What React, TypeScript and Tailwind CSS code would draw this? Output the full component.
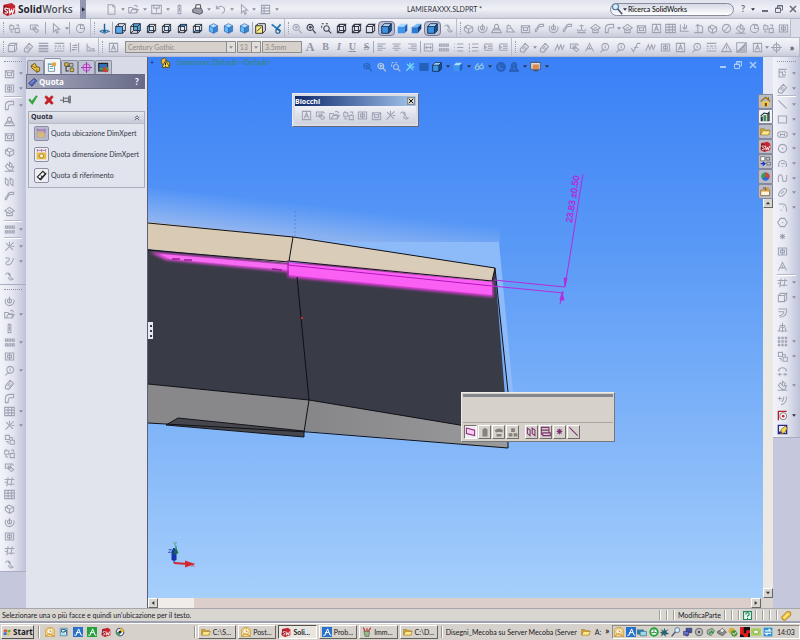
import type { ReactNode } from 'react';
import clsx from 'clsx';

// Outline glyphs on a 16x16 grid, drawn with the current text colour
const glyphs: Record<string, string> = {
  page: 'M3 1h7l3 3v11H3zM10 1v3h3',
  open: 'M1 13V5h5l1 2h5v6zM3 13l3-5h9l-3 5M9 3c2-2 4-1 5 2',
  save: 'M1 2h14v12H1zM4 2v4h8V2M8 6v5M8 12v2',
  clip: 'M6 3h4v11H6zM6 3q2-3 4 0M8 5v6',
  undo: 'M2 2v5h5M2 7c3-5 12-5 12 2 0 3-2 4-4 5',
  cursor: 'M5 1v12l3-3 2 5 2-1-2-5h4z',
  list: 'M2 2h12v12H2zM2 6h12M2 10h12M6 2v12',
  swap: 'M1 4h6v5H1zM9 8h6v6H9zM10 3h4v3M6 13H3v-3M3 1v3M12 6v2',
  sketch: 'M2 3h8v6H2zM5 9l6 5 3-3-5-4zM5 6h3M11 2l3 3',
  globe: 'M8 2a6 6 0 1 0 0 12a6 6 0 1 0 0-12zM8 2v6h6M10 4l3-2',
  cube: 'M2 5h9v9H2zM2 5l3-3h9l-3 3M14 2v9l-3 3',
  wire: 'M2 5h9v9H2zM2 5l3-3h9l-3 3M14 2v9l-3 3M5 2v9h9M5 11l-3 3',
  iso: 'M8 1l6 3v8l-6 3-6-3V4zM2 4l6 3 6-3M8 7v8',
  zoom: 'M6 2a4.500 4.500 0 1 0 .1 0M10 10l4 5M4 6h5M6 4v5',
  zoomArea: 'M1 1h3M7 1h3M1 4v3M8 4a4 4 0 1 0 .1 0M11 11l4 4',
  lines: 'M1 2h14M1 5h14M1 6h14M1 9h14M1 10h14M1 13h14M1 14h14',
  dashes: 'M1 2h14M1 6h3M6 6h4M12 6h3M1 9h2M5 9h2M9 9h2M13 9h2M1 13h14',
  spacing: 'M2 1v14M14 1v14M5 5h6l-2-2M11 11H5l2 2M5 8h7',
  corner: 'M14 2H3v11h9M3 6h5v4M10 4l3 3M7 10h6',
  constraint: 'M3 2v11h12M3 6l4 2v5M9 10h4v3',
  left: 'M2 3h12M2 6h8M2 9h12M2 12h7',
  center: 'M2 3h12M4 6h8M2 9h12M5 12h6',
  right: 'M2 3h12M6 6h8M2 9h12M7 12h7',
  fit: 'M2 3h12v10H2zM4 8h8M6 6L4 8l2 2M10 6l2 2-2 2',
  bullets: 'M2 3h1M6 3h9M2 8h1M6 8h9M2 13h1M6 13h9',
  numbers: 'M2 2v3M2 7v3M2 12v3M6 3h9M6 8h9M6 13h9',
  indent: 'M2 3h12M7 6h7M7 9h7M2 12h12M2 5l3 3-3 2z',
  boss: 'M2 6l5-3 7 3v6l-6 3-6-4zM2 6l6 3 6-3M8 9v6M5 4v4',
  revolve: 'M3 4c-3 5 0 10 5 10s8-5 6-9M5 7a3 3 0 1 0 6 0a3 3 0 1 0-6 0M8 1v9',
  sweep: 'M2 13C6 13 4 5 9 5h5M2 9c4 0 2-6 7-7h5v3M2 9v4',
  loft: 'M8 2a3 3 0 1 0 .1 0M3 10h10l2 4H1zM5 7l-2 3M11 7l2 3',
  fillet: 'M2 14V8c0-4 3-6 7-6h5v5H9c-2 0-3 2-3 7zM2 14h4',
  shell: 'M2 4h12v10H2zM5 7h6v4H5zM2 4l3 3M14 4l-3 3',
  rib: 'M1 13h14M3 13V4h4l6 9M5 2v2M5 8h3',
  pattern: 'M2 3h3v3H2zM7 3h3v3H7zM12 3h3v3h-3zM2 10h3v3H2zM7 10h3v3H7zM12 10h3v3h-3z',
  dots: 'M2 2h2v2H2zM7 2h2v2H7zM12 2h2v2h-2zM2 7h2v2H2zM7 7h2v2H7zM12 7h2v2h-2zM2 12h2v2H2zM7 12h2v2H7zM12 12h2v2h-2z',
  grid: 'M1 2h14v12H1zM1 6h14M1 10h14M6 2v12M11 2v12',
  axis: 'M2 14L14 2M3 3l10 10M8 1v5M11 8h4',
  spring: 'M2 3h4c3 0 2 4-1 5s-3 5 1 5 6-3 8-10',
  link: 'M2 5c3-4 8-1 7 2M14 11c-3 4-8 1-7-2M6 4l6 8',
  glasses: 'M2 9a3 3 0 1 0 6 0a3 3 0 1 0-6 0M9 8a3 3 0 1 0 6 0a3 3 0 1 0-6 0M3 6l4-4M11 5l3-3',
  arrowDown: 'M2 2v10h12M8 1v8M5 6l3 3 3-3M11 3v5',
  arrowUp: 'M2 14h12V5M7 13V2M4 5l3-3 3 3M11 3l3 3',
  hook: 'M8 2v7M8 9c-2 4-6 3-6 0M8 9c2 4 6 3 6 0M5 4h6M2 14h12',
  tent: 'M1 7l7-5 7 5-7 4zM4 9v5h8V9M6 7h4',
  no: 'M8 2a6 6 0 1 0 .1 0M4 12l8-8',
  tag: 'M2 10l7-8 5 5-7 8-5-1zM5 10l4-4M7 12l4-4',
  balloon: 'M9 2a5 5 0 1 0 .1 0M6 11l-4 4M9 5v4',
  check: 'M2 9l3 5L11 2h4M6 8h6',
  wave: 'M1 13l4-9 2 7 3-7 2 7 3-7',
  frame: 'M2 3h12v10H2zM5 6h6v4H5zM8 3v10',
  letterBox: 'M2 2h12v12H2zM5 12l3-8 3 8M6 9h4',
  tri: 'M8 2l7 12H1zM8 6v4M8 12v1',
  shade: 'M1 1h14v14H1zM2 14L14 2M5 14l9-9M8 14l6-6M11 14l3-3M3 14L14 3',
  target: 'M8 3a5 5 0 1 0 .1 0M8 0v16M0 8h16',
  line: 'M2 2l12 12',
  rect: 'M2 3h12v10H2z',
  slot: 'M5 4h6a4 4 0 0 1 0 8H5a4 4 0 0 1 0-8zM5 6v4M11 6v4M5 8h6',
  circle: 'M8 2a6 6 0 1 0 .1 0M8 7v2M7 8h2',
  arc: 'M2 12C2 1 14 1 14 12M7 12h2M6 9a3 3 0 0 1 5 0M2 12h2M12 12h2',
  spline: 'M2 13V7c0-7 6-5 6 1s6 6 6 0V3',
  ellipse: 'M3 13C0 10 9 0 13 3s-6 13-10 10zM6 10l4-4',
  curve: 'M3 3h6c4 0 5 4 5 11M5 12h2M9 7h1',
  hex: 'M5 2h6l4 6-4 6H5L1 8zM7 8h2',
  star: 'M8 4v8M4 8h8M5 5l6 6M11 5l-6 6',
  text: 'M2 14L8 2l6 12M5 10h6M8 6v5',
  trim: 'M1 5h14M4 12h11M6 2L4 15M12 2l-2 12M1 9h5',
  offset: 'M2 3h12v3c0 5-4 8-10 9M2 7h8c0 3-3 5-7 6M14 3v4',
  mirror: 'M3 13h10L11 5H5zM8 1v14M1 13h14M6 8h4',
  convert: 'M2 2h6v6H2zM9 9h6v6H9zM8 5h4v4M3 11h3v3',
  plusArc: 'M4 2v6M1 5h6M14 2c0 7-3 11-8 12M10 2c0 4-1 6-3 8',
  move: 'M2 7C3 1 13 1 14 7M1 12h6M4 10v5M9 12h6M12 10v5M2 7h2M12 7h2',
  fan: 'M8 14l-6-6 3-4 3 4V2l4 3-2 4 4-1-2 5zM1 15h14',
  planes: 'M2 3l4 3v8l-4-3zM9 3l4 3v8l-4-3z',
  rects: 'M2 2h11v4H2zM4 10h11v4H4zM2 6v6h2M13 6v4',
  bell: 'M5 4q3-4 6 0v7l3 3H2l3-3zM1 14h14M8 6v3',
};

// Filled silhouettes of the selection filters that are not available
const blobs: Record<string, string> = {
  solidBody: 'M4 15V4q4-5 8 0v11z',
  surface: 'M1 6q7-7 14 0l-3 3-1-1H5L4 9zM4 11h8v4H4z',
  assembly: 'M5 2h6v6H5zM1 10h6v5H1zM9 10h6v5H9z',
};

const Glyph = ({ name, className = 'size-3 text-[#a0a3b3]', width = 1.5 }: { name: string; className?: string; width?: number }) => (
  <svg viewBox="0 0 16 16" className={clsx('shrink-0', className)} fill="none" stroke="currentColor" strokeWidth={width} aria-hidden="true">
    <path d={glyphs[name]} />
  </svg>
);

const Caret = ({ dark = false }: { dark?: boolean }) => (
  <svg viewBox="0 0 6 4" className={clsx('w-1 h-[3px] shrink-0', dark ? 'text-[#303040]' : 'text-[#8b8e9c]')} aria-hidden="true">
    <path d="M0 0h6L3 4z" fill="currentColor" />
  </svg>
);

const picture: Record<string, ReactNode> = {
  normalTo: <><path d="M8 1v11M5 10l3 3 3-3" stroke="#17629a" strokeWidth="2" fill="none" /><path d="M1 12l4-1M11 11l4 1-7 3-7-3" fill="none" stroke="#3474a8" strokeWidth="1.500" /></>,
  solid: <><path d="M1 5h10v10H1z" fill="#3e92e2" /><path d="M1 5l4-4h10l-4 4z" fill="#b6e0ff" /><path d="M11 5l4-4v10l-4 4z" fill="#15539d" /><path d="M1 5h10v10H1zM1 5l4-4h10v10l-4 4M11 5l4-4" fill="none" stroke="#10233f" strokeWidth="1.200" /></>,
  shaded: <><path d="M1 5h10v10H1z" fill="#3f95ec" /><path d="M1 5l4-4h10l-4 4z" fill="#a9daff" /><path d="M11 5l4-4v10l-4 4z" fill="#1e62bd" /></>,
  front: <><path d="M5 1h10v10H5z" fill="none" stroke="#202634" strokeWidth="1.300" /><path d="M1 5h10v10H1z" fill="#59a8ea" stroke="#182840" strokeWidth="1.300" /><path d="M1 5l4-4M11 5l4-4M11 15l4-4" stroke="#202634" /></>,
  back: <><path d="M5 1h10v10H5z" fill="#59a8d4" stroke="#182840" strokeWidth="1.300" /><path d="M1 5h10v10H1zM1 5l4-4M11 5l4-4M11 15l4-4M1 15l4-4" fill="none" stroke="#202634" strokeWidth="1.300" /></>,
  sideL: <><path d="M2 5l3-3v9l-3 3z" fill="#68b2ea" /><path d={glyphs.wire} fill="none" stroke="#202634" strokeWidth="1.300" /></>,
  sideR: <><path d="M11 5l3-3v9l-3 3z" fill="#68b2ea" /><path d={glyphs.wire} fill="none" stroke="#202634" strokeWidth="1.300" /></>,
  top: <><path d="M2 5l3-3h9l-3 3z" fill="#2f91e4" /><path d={glyphs.wire} fill="none" stroke="#202634" strokeWidth="1.300" /></>,
  bottom: <><path d="M2 14l3-3h9l-3 3z" fill="#5f9fc8" /><path d={glyphs.wire} fill="none" stroke="#202634" strokeWidth="1.300" /></>,
  iso: <><path d="M8 1l6 3v8l-6 3-6-3V4z" fill="#3586d6" /><path d="M2 4l6 3v8l-6-3z" fill="#6bb6f2" /><path d="M2 4l6-3 6 3-6 3z" fill="#bfe3ff" /><path d={glyphs.iso} fill="none" stroke="#1a5ba6" strokeWidth=".8" /></>,
  note: <><path d="M1 4h10v11H1z" fill="#f5ec8a" stroke="#222" strokeWidth="1.300" /><path d="M1 4l4-3h10v10l-4 4M3 12l6-6" fill="none" stroke="#222" strokeWidth="1.300" /></>,
  plane: <><path d="M1 2l13 10M14 2l-7 8" stroke="#2277b4" strokeWidth="2.500" /><circle cx="10" cy="12" r="3" fill="none" stroke="#205c90" strokeWidth="1.500" /></>,
  wedge: <><path d="M1 6h9v9H1z" fill="#2c7cd6" /><path d="M1 6l8-5h6l-5 5z" fill="#75b9f5" /><path d="M10 6l5-5v7l-5 7z" fill="#123d80" /></>,
  sw: <><path d="M2 3l9-2 4 3v9l-9 3-5-3z" fill="#c92531" /><path d="M2 3l5 2v10l-6-3z" fill="#8f1722" /><path d="M7 8c-4-3-5 1-2 2s1 4-2 2M8 7l1 6 2-4 1 4 2-6" fill="none" stroke="#fff" strokeWidth="1.300" /></>,
  part: <><path d="M2 5l5-3 3 5 4 1v5l-4 2-8-7z" fill="#ecc541" stroke="#5c4312" strokeWidth="1.200" /><path d="M2 5l5 3 3-1M10 10v5" fill="none" stroke="#5c4312" /></>,
  warnPart: <><path d="M2 4l5-3 3 5 4 2v5l-4 2-8-6z" fill="#ecc541" stroke="#5c4312" strokeWidth="1.200" /><path d="M8 5l6 10H3z" fill="#f8e04a" stroke="#4c3b12" strokeWidth="1.200" /><path d="M8 8v4M8 13v1" stroke="#222" strokeWidth="1.500" /></>,
  props: <><path d="M2 5h9v10H2z" fill="#fff" stroke="#4d6685" /><path d="M7 2h6v5l-6 1z" fill="#e4a23b" /><path d="M1 4h5M4 8h5M4 11h5" stroke="#5bb1c4" strokeWidth="1.500" /></>,
  custom: <><path d="M1 6h13v8H1z" fill="#fff4d8" stroke="#77604a" strokeWidth="1.200" /><path d="M1 6h13v2H1zM6 2h7v4H6z" fill="#d3993f" /><path d="M4 3h4v3" fill="none" stroke="#666" strokeWidth="1.500" /></>,
  config: <><path d="M3 2v11h4M3 6h5" stroke="#333" fill="none" strokeWidth="1.500" /><path d="M1 1h5v5H1zM9 9h5v5H9z" fill="#e6bb3a" stroke="#443" /><path d="M8 2h5v5H8z" fill="#bbb" stroke="#443" /></>,
  dimx: <><circle cx="8" cy="8" r="5" fill="#eda4e8" stroke="#b456cb" strokeWidth="1.500" /><path d="M8 0v16M0 8h16" stroke="#9440b4" strokeWidth="1.500" /></>,
  render: <><path d="M1 2h13v11H1z" fill="#326fb8" stroke="#222" strokeWidth="1.500" /><path d="M2 9h11v3H2z" fill="#4b9a55" /><circle cx="11" cy="11" r="4" fill="#d33e2e" /><path d="M11 11V7a4 4 0 0 1 4 4z" fill="#35a048" /></>,
  screen: <><path d="M1 2h14v10H1z" fill="#d9dde4" stroke="#555e70" strokeWidth="1.500" /><path d="M4 5h9v7H4z" fill="#e08a4a" /><path d="M5 14h7" stroke="#48506a" strokeWidth="2" /></>,
  accept: <path d="M1 8l2-2 3 4 7-9 2 1-8 13z" fill="#2fae35" stroke="#167922" strokeWidth=".6" />,
  cancel: <path d="M1 3l3-2 4 4 4-4 3 2-4 5 4 5-3 2-4-4-4 4-3-2 4-5z" fill="#ce1e25" stroke="#92141a" strokeWidth=".6" />,
  pin: <><path d="M0 9h5M5 4v9M5 6h8v5H5M13 3v10h2V3z" fill="#d2d2d8" stroke="#565963" strokeWidth="1.300" /></>,
  tagBlue: <><path d="M1 10l9-8 4 4-8 9z" fill="#5667bb" stroke="#22275c" /><path d="M4 10l6-5" stroke="#c7d1ff" /></>,
  loc: <><path d="M1 4h9l4 4v6H1z" fill="#baa99d" /><path d="M2 4V1M13 7V1M2 3h11" stroke="#9c61b7" strokeWidth="1.500" fill="none" /><path d="M3 6h6l3 3v4H3z" fill="#d7ba78" /></>,
  size: <><path d="M1 5h14v10H1z" fill="#e6bb49" /><circle cx="8" cy="10" r="3" fill="#fff2bc" stroke="#8c6420" /><path d="M2 2h12M2 0v4M14 0v4M8 0v4" stroke="#b06c9c" strokeWidth="1.300" /></>,
  ref: <><path d="M2 10l8-8 4 4-7 8z" fill="#fff" stroke="#222" strokeWidth="1.600" /><path d="M5 14l10-10M7 8l2 2" stroke="#222" strokeWidth="1.500" /></>,
  home: <><path d="M1 8l7-6 7 6" fill="none" stroke="#a27614" strokeWidth="2" /><path d="M3 8h10v7H3z" fill="#f2c743" /><path d="M7 10h3v5H7zM11 2h2v4" fill="#6d481a" /></>,
  books: <><path d="M1 8h3v7H1zM10 3h4v12h-4z" fill="#16334a" /><path d="M5 6h4v9H5z" fill="#3c8f62" /><path d="M1 7l5-4 5 1 3-3" stroke="#112638" fill="none" strokeWidth="1.500" /><path d="M11 4h1v10h-1z" fill="#f0c443" /></>,
  folder: <><path d="M1 13V4h5l2 2h6v7z" fill="#d8a92d" /><path d="M1 13l3-6h11l-3 6z" fill="#ffe88b" /><path d="M1 13V4h5l2 2h6M1 13l3-6h11l-3 6z" fill="none" stroke="#916c1f" strokeWidth=".8" /></>,
  views: <><path d="M1 1h6v6H1z" fill="#fff" stroke="#555" /><path d="M9 2h5v4H9zM10 9h5v4h-5z" fill="#ccc" stroke="#555" /><path d="M1 11h5M4 9l3 2-3 3" stroke="#2334bd" strokeWidth="2" fill="none" /></>,
  ball: <><circle cx="8" cy="8" r="6" fill="#3468d4" /><path d="M8 8V2a6 6 0 0 0-5 9z" fill="#34a646" /><path d="M8 8V2a6 6 0 0 1 5 9z" fill="#e13f32" /></>,
  start: <><path d="M2 3q3-1 5 0v4q-3-1-6 0z" fill="#e7502c" /><path d="M8 3q3 1 6 0l-1 4q-3 1-5 0z" fill="#6dae38" /><path d="M1 8q3-1 6 0l-1 5q-2-1-5 0z" fill="#3f72d0" /><path d="M8 8q2 1 5 0l-1 5q-3 1-5 0z" fill="#f2c232" /></>,
  mail: <><path d="M1 4l3-3h8l3 3v11H1z" fill="#ffdf86" stroke="#be8b28" /><circle cx="8" cy="7" r="5" fill="#fffbe6" stroke="#cd9a30" /><path d="M8 4v3l3 1M1 15l6-5 8 5" fill="none" stroke="#9d6818" /></>,
  outlook: <><path d="M2 2h11v12H2z" fill="#b8dff3" stroke="#2e708f" /><path d="M4 4h6v4H4zM7 8l5-3v7" fill="#fff" stroke="#286787" strokeWidth="1.500" /></>,
  blueA: <><path d="M0 0h16v16H0z" fill="#2870c9" /><path d="M2 13h3l4-10M9 3l4 10h2M5 9h6" fill="none" stroke="#fff" strokeWidth="1.600" /></>,
  greenA: <><path d="M0 0h16v16H0z" fill="#27a13c" /><path d="M2 13h3l4-10M9 3l4 10h2M5 9h6" fill="none" stroke="#fff" strokeWidth="1.600" /></>,
  disc: <><circle cx="8" cy="8" r="6" fill="#fff" stroke="#4a5c80" strokeWidth="2" /><path d="M8 2a6 6 0 0 1 6 6H8z" fill="#f1c62e" /><path d="M2 8a6 6 0 0 0 6 6V8z" fill="#4da66c" /><circle cx="8" cy="8" r="2.500" fill="#333" /></>,
  paint: <><path d="M3 7h9l-1 8H5z" fill="#93bb83" stroke="#555" /><path d="M5 7L2 1M8 7V2M10 7l4-6" stroke="#b2463c" strokeWidth="2" /></>,
  display: <><path d="M0 4h11v8H0z" fill="#2f7fa1" /><path d="M5 7h10v7H5z" fill="#9fd9e8" stroke="#286582" /></>,
  clock: <><circle cx="8" cy="8" r="6" fill="#fff" stroke="#22a33a" strokeWidth="3" /><path d="M8 8V4M4 9h8" stroke="#267a35" strokeWidth="1.500" /></>,
  splat: <path d="M1 3l5 3 1-5 2 5 5-3-4 5 5 3-6 1v4l-3-4-5 3 2-4-3-3 4-1z" fill="#2e6272" />,
  lens: <><circle cx="10" cy="5" r="4" fill="#d4efff" stroke="#597b9a" strokeWidth="1.500" /><path d="M7 8l-6 7" stroke="#444e74" strokeWidth="2" /></>,
  net: <><path d="M5 2h9v7H5z" fill="#4550a6" stroke="#222a5e" /><path d="M1 7h8v6H1zM4 13h3v2" fill="#6b75c8" stroke="#222a5e" /></>,
  speaker: <><circle cx="8" cy="8" r="6" fill="#b9bac0" stroke="#666" strokeWidth="1.500" /><circle cx="8" cy="8" r="2" fill="#555" /></>,
  usb: <><path d="M2 5l8-3 4 4-6 8-6-3z" fill="#9db6a0" stroke="#545f58" /><path d="M5 11l4-4 3 3" stroke="#2d8f3c" strokeWidth="2" fill="none" /></>,
  printer: <><path d="M1 7l8-4 6 5-6 6-8-4z" fill="#8b8c90" stroke="#444" /><path d="M4 7l4-5 4 3-3 4z" fill="#eee" stroke="#555" /></>,
  shield: <><circle cx="6" cy="6" r="5" fill="#d5b13a" /><circle cx="10" cy="10" r="5" fill="#4d8f37" /><path d="M7 10l3 2 4-5" fill="none" stroke="#fff" strokeWidth="1.500" /></>,
  redBlack: <><path d="M0 0h16v16H0z" fill="#111" /><path d="M0 0h6v10h4V5h6v5h-3v6H7l-3-4H0z" fill="#e0201e" /></>,
  nvidia: <><path d="M0 2h16v12H0z" fill="#a9cf62" /><path d="M3 8q5-7 10 0-5 6-10 0z" fill="#eff8da" stroke="#608b22" /></>,
  teams: <><path d="M1 1h14v14H1z" fill="#2f94d9" /><path d="M3 6h9l-3-3M13 10H4l3 3" fill="none" stroke="#fff" strokeWidth="2" /></>,
  help: <><path d="M1 1h14v14H1z" fill="#eafff1" stroke="#248760" strokeWidth="2" /><path d="M5 6q0-3 3-3t3 3q0 2-3 3v1M8 12v2" fill="none" stroke="#167548" strokeWidth="2" /></>,
  tagGold: <><path d="M1 10l8-8 5 1v5l-8 7-4-1z" fill="#f4bf34" stroke="#9a6b16" /><path d="M4 12l7-7" stroke="#fff1ab" strokeWidth="2" /></>,
  relation: <><path d="M2 15V2h12" fill="none" stroke="#b3202a" strokeWidth="2" /><circle cx="9" cy="9" r="5" fill="#fff" stroke="#666" strokeWidth="1.200" /><circle cx="9" cy="9" r="2" fill="#cf2730" /></>,
  repair: <><path d="M2 2h12v12H2z" fill="#eef0f6" stroke="#27278c" strokeWidth="2" /><path d="M6 8l6-5 3 3-4 7-6 1z" fill="#f3d64c" stroke="#7c5222" /><path d="M2 12h5" stroke="#27278c" strokeWidth="2" /></>,
  print: <><path d="M5 7l1-6h6l1 6" fill="#fff" stroke="#4b4e58" strokeWidth="1.500" /><path d="M1 8l3-2h9l2 3v4l-4 2-10-3z" fill="#989ba6" stroke="#4b4e58" strokeWidth="1.300" /></>,
  skew: <path d="M2 3l12 3v8L2 11z" fill="#f8cfee" stroke="#8c2a7e" strokeWidth="1.500" />,
};

const Picture = ({ name, className = 'size-3' }: { name: string; className?: string }) => (
  <svg viewBox="0 0 16 16" className={clsx('shrink-0', className)} aria-hidden="true">{picture[name]}</svg>
);

// A strip is written as a short list: "name" glyph, "*name" colour picture,
// "#name" pressed picture, "!name" dark glyph, "|" separator, "v" drop-down caret, "_" blank
const Tool = ({ item, vertical = false }: { item: string; vertical?: boolean }) => {
  if (item === '|') {
    return vertical ? <span className="mx-1 h-[2px] border-t border-b border-t-[#b4b7c8] border-b-white" /> : <span className="w-px h-3 bg-[#a4a7b9]" />;
  }
  if (item === 'v') return <Caret />;
  if (item === '_') return <span className="flex-1" />;
  const [key, drop] = item.split('+');
  const pressed = key.startsWith('#');
  const colour = pressed || key.startsWith('*');
  const dark = key.startsWith('!');
  const name = colour || dark ? key.slice(1) : key;
  return (
    <button
      type="button"
      aria-label={name}
      className={clsx('flex flex-1 items-center min-w-0 min-h-0', vertical ? 'pl-1 gap-1' : 'justify-center', pressed && 'h-[15px] rounded-sm border border-[#777b99] bg-[#b9bdd4]')}
    >
      {colour ? <Picture name={name} className="size-[11px]" /> : <Glyph name={name} className={clsx('size-[11px]', dark ? 'text-[#353945]' : 'text-[#a0a3b3]')} />}
      {drop !== undefined && <Caret dark={name === 'relation'} />}
    </button>
  );
};

const Strip = ({ items, className }: { items: string[]; className?: string }) => (
  <div role="toolbar" className={clsx('flex h-full min-w-0 items-center border-r border-[#b9bccb] bg-linear-to-b from-[#f4f5fa] via-[#e5e7f0] to-[#c9cbda]', className)}>
    <span className="h-3 w-[2px] shrink-0 border-l border-dotted border-[#9da0b0] ml-[3px]" />
    {items.map((item, i) => <Tool key={i} item={item} />)}
  </div>
);

const Column = ({ items, className }: { items: string[]; className?: string }) => (
  <div role="toolbar" className={clsx('flex min-h-0 flex-col border-b border-[#aaadc0] bg-linear-to-r from-[#f3f4fa] via-[#e2e4ef] to-[#bfc3d9]', className)}>
    <span className="mx-1 mt-1 mb-1 border-t border-dotted border-[#8f92a4]" />
    {items.map((item, i) => <Tool key={i} item={item} vertical />)}
  </div>
);

const WindowButtons = ({ className }: { className?: string }) => (
  <div className={clsx('flex items-center', className)}>
    <button type="button" aria-label="Riduci"><svg viewBox="0 0 8 8" className="size-2"><path d="M1 6h6" stroke="currentColor" strokeWidth="2" /></svg></button>
    <button type="button" aria-label="Ripristina"><svg viewBox="0 0 8 8" className="size-2" fill="none" stroke="currentColor"><path d="M2.500 3V.5h5V5H6M.5 3h5v4.500h-5zM.5 3.500h5M2.500 1h5" /></svg></button>
    <button type="button" aria-label="Chiudi"><svg viewBox="0 0 8 8" className="size-2"><path d="M1 1l6 6M7 1L1 7" stroke="currentColor" strokeWidth="1.500" /></svg></button>
  </div>
);

const TitleBar = () => (
  <header className="flex h-[19px] shrink-0 items-center border-b border-[#b5b8c8] bg-linear-to-b from-[#dfe1ec] via-[#f0f1f7] to-[#d0d2df]">
    <div className="flex w-[86px] shrink-0 items-center gap-[2px] pl-[2px]">
      <Picture name="sw" className="size-[14px]" />
      <span className="text-[10px] font-bold text-[#22242c] [font-family:'Open_Sans',sans-serif]">Solid<span className="font-semibold text-[#4a4c55]">Works</span></span>
      <button type="button" aria-label="Menu" className="ml-auto flex h-[19px] w-[6px] items-center justify-center bg-[#9396b1]">
        <svg viewBox="0 0 4 6" className="h-[5px] w-[3px]"><path d="M0 0l4 3-4 3z" fill="#22243a" /></svg>
      </button>
    </div>
    <div className="flex flex-[177] items-center pl-4">
      {['page', 'v', 'open', 'v', 'save', 'v', 'clip', '*print', 'v', 'undo', 'v', 'cursor', 'v', 'list', 'v'].map((item, i) => <Tool key={i} item={item} />)}
    </div>
    <h1 className="flex-[331] text-center text-[7px] text-[#30323a]">LAMIERAXXX.SLDPRT *</h1>
    <div className="flex flex-[124] items-center">
      <label className="flex h-[13px] w-full items-center rounded-full border border-[#888c9f] bg-linear-to-b from-[#d6d8e3] to-white">
        <Picture name="lens" className="size-3 -scale-x-100" />
        <Caret dark />
        <input aria-label="Ricerca" defaultValue="Ricerca SolidWorks" className="min-w-0 flex-1 bg-transparent pl-px text-[7px] text-black outline-none" />
      </label>
    </div>
    <div className="flex flex-[62] items-center justify-around pl-1 text-[#696c7a]">
      <button type="button" className="text-[9px] font-bold">?</button>
      <Caret dark />
      <WindowButtons className="gap-[6px]" />
    </div>
  </header>
);

const FontSelect = ({ label, value, className }: { label: string; value: string; className?: string }) => (
  <div className={clsx('flex h-3 min-w-0 items-center border border-[#8f8d8d] bg-[#d6d1ca]', className)}>
    <select aria-label={label} className="min-w-0 flex-1 appearance-none bg-transparent pl-[2px] text-[7px] leading-none text-[#8d8984]">
      <option>{value}</option>
    </select>
    <span className="flex h-full w-[9px] shrink-0 items-center justify-center border-l border-[#8f8d8d] bg-[#e2dfda]"><Caret /></span>
  </div>
);

const FormatStrip = () => (
  <div role="toolbar" className="flex h-full flex-[413] items-center border-r border-[#b9bccb] bg-linear-to-b from-[#f4f5fa] via-[#e5e7f0] to-[#c9cbda]">
    <span className="ml-[3px] h-3 w-[2px] shrink-0 border-l border-dotted border-[#9da0b0]" />
    <div className="flex flex-[180] items-center gap-px">
      <span className="flex w-5 justify-center"><Glyph name="letterBox" className="size-[11px] text-[#a0a3b3]" /></span>
      <FontSelect label="Carattere" value="Century Gothic" className="flex-[103]" />
      <FontSelect label="Dimensione" value="13" className="flex-[21]" />
      <input aria-label="Altezza" defaultValue="3.5mm" className="h-3 min-w-0 flex-[34] border border-[#8f8d8d] bg-[#d6d1ca] pl-[2px] text-[7px] text-[#8d8984]" />
    </div>
    <div className="flex flex-[75] items-center justify-around text-[10px] leading-none font-bold text-[#92959f] [font-family:'Liberation_Serif',serif]">
      <button type="button" className="text-[12px]">A</button>
      <button type="button">B</button>
      <button type="button" className="italic">I</button>
      <button type="button" className="underline">U</button>
      <button type="button" className="line-through">S</button>
    </div>
    <div className="flex flex-[145] items-center">
      {['|', 'left', 'center', 'right', '|', 'fit', 'pattern', 'bullets', 'numbers', 'indent', 'indent'].map((item, i) => <Tool key={i} item={item} />)}
    </div>
  </div>
);

const tabs = ['part', 'props', 'config', 'dimx', 'render'];

const options = [
  { icon: 'loc', label: 'Quota ubicazione DimXpert', active: true },
  { icon: 'size', label: 'Quota dimensione DimXpert' },
  { icon: 'ref', label: 'Quota di riferimento' },
];

const PropertyPanel = () => (
  <aside className="flex w-[122px] shrink-0 flex-col border-r border-[#5d6072] bg-[#e1e4ec]">
    <div role="tablist" className="flex h-[17px] items-end bg-[#d8dbe7] pl-px">
      {tabs.map((tab, i) => (
        <button
          key={tab}
          type="button"
          role="tab"
          aria-label={tab}
          aria-selected={i === 1}
          className={clsx('flex w-[17px] items-center justify-center rounded-t-xs border border-b-0 border-[#8c90a4]', i === 1 ? 'h-4 bg-[#f4f5f9]' : 'h-[14px] bg-[#bfc3d2]')}
        >
          <Picture name={tab} className="size-[11px]" />
        </button>
      ))}
    </div>
    <div className="mr-[2px] flex h-[15px] items-center gap-px border border-[#6a6d87] bg-linear-to-r from-[#a5a8bd] to-[#686b87] px-px text-white">
      <Picture name="tagBlue" className="size-[10px]" />
      <h2 className="flex-1 text-[8px] font-bold [font-family:'Open_Sans',sans-serif]">Quota</h2>
      <button type="button" className="px-1 text-[9px] font-bold leading-none">?</button>
    </div>
    <div className="flex h-[21px] items-center gap-[6px] pl-[2px]">
      <button type="button" aria-label="OK"><Picture name="accept" className="size-[10px]" /></button>
      <button type="button" aria-label="Annulla"><Picture name="cancel" className="size-[10px]" /></button>
      <button type="button" aria-label="Mantieni visibile"><Picture name="pin" className="size-[11px]" /></button>
    </div>
    <section className="mx-[2px] mt-px border border-[#a8abba]">
      <button type="button" className="flex h-3 w-full items-center justify-between border-b border-[#b9bcc9] bg-linear-to-b from-[#e6e8ef] to-[#c7cad6] pr-1 pl-[2px] text-[7px] font-bold text-[#2c2e3a] [font-family:'Open_Sans',sans-serif]">
        Quota
        <svg viewBox="0 0 8 8" className="size-[6px]" fill="none" stroke="#3d4052"><path d="M1 4l3-3 3 3M1 7l3-3 3 3" /></svg>
      </button>
      <ul className="flex flex-col gap-[6px] px-[5px] pt-[2px] pb-1">
        {options.map((option) => (
          <li key={option.label}>
            <button type="button" className="flex items-center gap-[2px] text-[7px] leading-none whitespace-nowrap text-[#343746]">
              <span className={clsx('flex size-[15px] items-center justify-center rounded-xs border border-[#8c8f9f]', option.active ? 'bg-[#b6b9d1]' : 'bg-[#eceef4]')}>
                <Picture name={option.icon} className="size-[11px]" />
              </span>
              {option.label}
            </button>
          </li>
        ))}
      </ul>
    </section>
  </aside>
);

const Scene = () => (
  <svg viewBox="148 57 615 542" preserveAspectRatio="xMinYMin slice" className="absolute inset-0 size-full" role="img" aria-label="LAMIERAXXX">
    <defs>
      <linearGradient id="sky" x1="0" y1="0" x2="0" y2="1">
        <stop offset="0" stopColor="#3a80f7" />
        <stop offset="0.35" stopColor="#5999f6" />
        <stop offset="1" stopColor="#a6cffb" />
      </linearGradient>
      <linearGradient id="haze" gradientUnits="userSpaceOnUse" x1="324" y1="206" x2="320" y2="240">
        <stop offset="0" stopColor="#8fb6f3" stopOpacity="0" />
        <stop offset="1" stopColor="#9ab9ee" stopOpacity="0.85" />
      </linearGradient>
      <linearGradient id="steel" x1="0" y1="0" x2="1" y2="0">
        <stop offset="0" stopColor="#868688" />
        <stop offset="1" stopColor="#9a999c" />
      </linearGradient>
      <filter id="glow" x="-10%" y="-50%" width="120%" height="200%"><feGaussianBlur stdDeviation="1.500" /></filter>
    </defs>
    <path d="M148 57h615v542H148z" fill="url(#sky)" />
    <path d="M148 188l352 37v17H350l-57-5-145-14z" fill="url(#haze)" />
    <path d="M293 237l57 5h149l14 150h-6l-12-124z" fill="#8dbaf9" />
    <path d="M148 249l143 14 204 7 13 164-199-33-161-17z" fill="#393b46" />
    <path d="M148 384l161 16-4 31-157-8z" fill="#88878a" />
    <path d="M309 400l199 33v15l-204-17z" fill="url(#steel)" />
    <path d="M166 425l12-7 126 13v6z" fill="#46474e" stroke="#15151a" />
    <path d="M293 237l202 31-3 14-203-21z" fill="#d9cdb9" />
    <path d="M148 222l145 15-4 26-141-14z" fill="#d8cab3" />
    <path d="M150 252l139 12v8l-123-12z" fill="#ed4de6" filter="url(#glow)" />
    <path d="M160 254l129 11v5l-119-11z" fill="#f76cf2" />
    <path d="M288 262l205 20v15l-205-20z" fill="#ee3fe8" filter="url(#glow)" />
    <path d="M289 263l203 19v13l-203-20z" fill="#fb60f4" />
    <g fill="none" stroke="#101116" strokeWidth="1">
      <path d="M148 223l145 14 202 31-3 13M293 237l-4 24 203 20M148 250l141 12M495 268l13 124M297 277l12 123M148 384l161 16 199 33v15M309 400l-5 32M148 423l160 9 200 16" />
    </g>
    <path d="M295 211v25" stroke="#4468a7" strokeDasharray="2 2" opacity=".5" />
    <path d="M172 259h8M184 260h8M272 269l10 1" stroke="#951c95" strokeWidth="1.500" />
    <path d="M288 265l204 21M288 260v16" stroke="#b415bb" fill="none" />
    <circle cx="302" cy="318" r="1.200" fill="#c0303a" />
    <g stroke="#b42cdc" fill="none">
      <path d="M494 280l71 7M492 286l72 7M583 174l-18 113M563 291l-3 13" />
      <path d="M564 278h3l-2 8zM560 300l2-7 2 7z" fill="#b42cdc" />
    </g>
    <text transform="translate(572 223) rotate(-81)" fontSize="9" fill="#b42cdc" stroke="#b42cdc" strokeWidth=".4" fontFamily="Liberation Sans, sans-serif">23.83 ±0.50</text>
    <g fontSize="6" fontFamily="Liberation Sans, sans-serif">
      <path d="M174 563v-8M172 551l2-3 2 3v9h-4z" stroke="#1632a8" fill="#1b37a9" />
      <path d="M176 554v-8M174 553l2-4 2 4z" stroke="#17703b" fill="#17703b" />
      <path d="M174 563l14 1M186 562l6 2-6 2z" stroke="#d42631" strokeWidth="2" fill="#d42631" />
      <text x="173" y="546" fill="#1f8b4a">Y</text>
      <text x="168" y="553" fill="#1632a8">Z</text>
      <text x="191" y="567" fill="#d42631">X</text>
    </g>
  </svg>
);

const headsUp: { icon: ReactNode; label: string; drop?: boolean }[] = [
  { label: 'zoom finestra', icon: <Glyph name="zoom" className="size-[10px] text-[#2962bb]" width={2} /> },
  { label: 'zoom', icon: <Glyph name="zoom" className="size-[10px] text-[#b4cbdf]" width={2} /> },
  { label: 'zoom area', icon: <Glyph name="zoomArea" className="size-[10px] text-[#a9c4dc]" width={2} /> },
  { label: 'vista precedente', icon: <Glyph name="axis" className="size-[10px] text-[#78dcf4]" width={2} /> },
  { label: 'sezione', icon: <Glyph name="frame" className="size-[10px] text-[#2461bb]" width={3} /> },
  { label: 'orientamento', icon: <Picture name="solid" className="size-[10px]" />, drop: true },
  { label: 'stile', icon: <Picture name="shaded" className="size-[10px]" />, drop: true },
  { label: 'nascondi', icon: <Glyph name="glasses" className="size-[10px] text-[#8ac2df]" width={2} />, drop: true },
  { label: 'aspetto', icon: <Glyph name="globe" className="size-[10px] text-[#2860ba]" width={4} /> },
  { label: 'scena', icon: <Glyph name="bell" className="size-[10px] text-[#2860ba]" width={4} />, drop: true },
  { label: 'impostazioni', icon: <Picture name="screen" className="size-[11px]" />, drop: true },
];

const filters = ['*skew', '~solidBody', '~surface', '~assembly', '', 'planes', 'rects', 'star', 'line'];

const FilterIcon = ({ item }: { item: string }) => {
  if (item.startsWith('*')) return <Picture name={item.slice(1)} className="size-[11px]" />;
  if (item.startsWith('~')) {
    return <svg viewBox="0 0 16 16" className="size-[10px] text-[#85827e]" aria-hidden="true"><path d={blobs[item.slice(1)]} fill="currentColor" /></svg>;
  }
  return <Glyph name={item} className="size-[11px] text-[#7d3173]" />;
};

const Viewport = () => (
  <main className="relative min-w-0 flex-1 overflow-hidden bg-[#a6cffb]">
    <Scene />
    <div className="absolute top-0 left-[2px] flex items-center gap-[6px] text-[7px] text-[#37876f]">
      <span className="text-[#0d2c66]">+</span>
      <Picture name="warnPart" className="size-[11px]" />
      <span>lamieraxxx (Default&lt;&lt;Default&gt;</span>
    </div>
    <div role="toolbar" className="absolute top-1 left-[213px] flex items-center">
      {headsUp.map((tool) => (
        <button key={tool.label} type="button" aria-label={tool.label} className={clsx('flex items-center gap-1', tool.drop ? 'w-[21px] pl-px' : 'w-[14px] justify-center')}>
          {tool.icon}
          {tool.drop && <Caret dark />}
        </button>
      ))}
    </div>
    <div className="absolute top-1 right-[6px] text-[#a9cdf4]"><WindowButtons className="gap-[7px]" /></div>

    <div className="absolute top-[36px] left-[144px] w-[127px] border border-[#e8eaf0] border-r-[#65697c] border-b-[#65697c] bg-[#d9dce5] p-[2px]">
      <div className="flex h-[10px] items-center justify-between bg-linear-to-r from-[#11296d] to-[#a6c8ee] text-white">
        <h2 className="text-[7px] leading-none font-bold [font-family:'Open_Sans',sans-serif]">Blocchi</h2>
        <button type="button" aria-label="Chiudi Blocchi" className="mr-px flex size-2 items-center justify-center border border-[#8a8a8a] bg-[#d8d5cf] text-black">
          <svg viewBox="0 0 8 8" className="size-[6px]"><path d="M1 1l6 6M7 1L1 7" stroke="currentColor" strokeWidth="1.200" /></svg>
        </button>
      </div>
      <div className="flex h-[18px] items-center bg-linear-to-b from-[#f0f1f6] to-[#cfd2de] px-1">
        {['letterBox', 'sketch', 'open', 'swap', 'frame', 'shell', 'axis', 'link'].map((item) => <Tool key={item} item={item} />)}
      </div>
    </div>

    <div className="absolute top-[335px] left-[313px] flex h-[50px] w-[154px] flex-col border border-[#eeeae6] border-r-[#777] border-b-[#777] bg-[#d6d1cb] p-px">
      <div className="h-[3px] bg-[#85868d]" />
      <div className="flex-1 border-b border-[#aaa69f]" />
      <div className="flex h-[17px] items-center gap-px px-px">
        {filters.map((item, i) => (
          item === '' ? <span key={i} className="w-1" /> : (
            <button key={i} type="button" aria-label={item.replace(/[*~]/, '')} className={clsx('flex h-[14px] w-[13px] items-center justify-center border', i === 0 ? 'border-[#77736e] border-r-white border-b-white bg-[#f1eef0]' : 'border-white border-r-[#706c68] border-b-[#706c68]')}>
              <FilterIcon item={item} />
            </button>
          )
        ))}
      </div>
    </div>

    <div className="absolute top-[49%] left-0 flex h-[17px] w-[5px] flex-col items-center justify-around bg-[#e6e9f2] py-px">
      {[0, 1, 2].map((dot) => <span key={dot} className="size-[2px] bg-[#343748]" />)}
    </div>
  </main>
);

const ScrollButton = ({ label, d }: { label: string; d: string }) => (
  <button type="button" aria-label={label} className="flex size-[10px] shrink-0 items-center justify-center border border-white border-r-[#666] border-b-[#666] bg-[#d9d5d0]">
    <svg viewBox="0 0 6 6" className="size-1"><path d={d} fill="#333" /></svg>
  </button>
);

const taskTabs = ['home', 'books', 'folder', 'sw', 'views', 'ball', 'custom'];

const TaskRail = () => (
  <div className="relative flex w-[10px] shrink-0 flex-col bg-[#ece9e5]">
    <div className="h-[141px] shrink-0 bg-[#e4e7f1]" />
    <ScrollButton label="Scorri su" d="M3 1l3 4H0z" />
    <div className="flex-1" />
    <ScrollButton label="Scorri giù" d="M0 1h6L3 5z" />
    <div className="h-[10px] shrink-0 bg-[#d9d5d0]" />
    <div className="absolute top-[37px] right-0 flex w-[15px] flex-col">
      {taskTabs.map((tab, i) => (
        <button key={tab} type="button" aria-label={tab} className={clsx('flex h-[15px] items-center justify-center rounded-l-xs border border-[#85899b]', i === 1 ? 'bg-[#f2f3f8]' : 'bg-[#b9bdc9]')}>
          <Picture name={tab} className="size-[11px]" />
        </button>
      ))}
    </div>
  </div>
);

const tasks = [
  { icon: 'folder', label: 'C:\\S...' },
  { icon: 'mail', label: 'Post...' },
  { icon: 'sw', label: 'Soli...', active: true },
  { icon: 'blueA', label: 'Prob...' },
  { icon: 'paint', label: 'Imm...' },
  { icon: 'folder', label: 'C:\\D...' },
];

const tray = ['mail', 'blueA', 'display', 'clock', 'splat', 'lens', 'net', 'speaker', 'usb', 'printer', 'shield', 'redBlack', 'nvidia', 'teams'];

const Grooves = ({ count }: { count: number }) => (
  <div className="flex h-full items-center gap-[5px] px-[3px]">
    {Array.from({ length: count }, (_, i) => <span key={i} className="h-[10px] w-[2px] border-l border-[#a09d98] bg-white" />)}
  </div>
);

const StatusBar = () => (
  <footer className="flex h-[15px] shrink-0 items-center border-t border-b-2 border-t-[#a7a6ab] border-b-[#9da0ae] bg-[#d9d6d2] pr-1 pl-[2px] text-[7px] text-[#18181c]">
    <p className="flex-1 truncate">Selezionare una o più facce e quindi un'ubicazione per il testo.</p>
    <Grooves count={3} />
    <span>ModificaParte</span>
    <Grooves count={3} />
    <Picture name="help" className="size-[9px]" />
    <Grooves count={4} />
    <Picture name="tagGold" className="mr-1 size-[11px]" />
  </footer>
);

const TaskBar = () => (
  <nav className="flex h-[17px] shrink-0 items-center border-t border-white bg-[#d6d2cb] pl-px text-[7px] text-[#18181c]">
    <button type="button" className="flex h-[14px] w-[33px] shrink-0 items-center gap-px border border-white border-r-[#55534f] border-b-[#55534f] pl-px text-[8px] leading-none font-bold [font-family:'Open_Sans',sans-serif]">
      <Picture name="start" className="size-[9px]" />
      Start
    </button>
    <span className="mx-1 h-3 w-[2px] border-l border-[#96928c] bg-white" />
    <div className="flex flex-[150] items-center gap-1 pl-px">
      {['mail', 'outlook', 'blueA', 'greenA', 'sw', 'disc'].map((name) => (
        <button key={name} type="button" aria-label={name}><Picture name={name} className="size-[10px]" /></button>
      ))}
    </div>
    <span className="mr-[2px] h-3 w-[2px] border-l border-[#96928c] bg-white" />
    <div className="flex flex-[242] gap-[2px]">
      {tasks.map((task) => (
        <button
          key={task.label}
          type="button"
          className={clsx('flex h-[14px] min-w-0 flex-1 items-center gap-[2px] border pl-[2px]', task.active ? 'border-[#55534f] border-r-white border-b-white bg-[#e9e6e2] font-bold' : 'border-white border-r-[#66635f] border-b-[#66635f]')}
        >
          <Picture name={task.icon} className="size-[10px]" />
          <span className="whitespace-nowrap">{task.label}</span>
        </button>
      ))}
    </div>
    <span className="mx-[3px] h-3 w-[2px] border-l border-[#96928c] bg-white" />
    <div className="flex flex-[165] items-center justify-between pr-[3px] whitespace-nowrap">
      <span>Disegni_Mecoba su Server Mecoba (Server</span>
      <Picture name="folder" className="size-[10px]" />
      <span>A:</span>
      <button type="button" className="pb-1 text-[9px] leading-none font-bold">»</button>
    </div>
    <div className="flex h-[14px] flex-[182] items-center justify-between border border-[#8d8983] border-r-white border-b-white pr-1 pl-px">
      {tray.map((name) => <Picture key={name} name={name} className="size-[10px]" />)}
      <time className="pl-[3px]">14:03</time>
    </div>
  </nav>
);

export default function App() {
  return (
    <div className="flex h-screen flex-col overflow-hidden bg-[#c9cbdb] [font-family:Lato,'Liberation_Sans',sans-serif]">
      <TitleBar />
      <div className="flex h-[19px] shrink-0 border-b border-[#b5b8c8] bg-[#dcdeea]">
        <Strip className="flex-[91]" items={['swap', 'sketch', '|', 'cursor', 'v', '|', 'globe']} />
        <Strip className="flex-[194]" items={['*normalTo', '|', '*front', '*back', '*sideL', '*sideR', '*top', '*bottom', '*iso', '*iso', '*iso', '|', '*note', '*plane']} />
        <Strip className="flex-[172]" items={['zoom', '!zoom', '!zoomArea', '!wire', '!wire', '!cube', '#solid', '*shaded', '*wedge', '#solid', 'link']} />
        <Strip className="flex-[336]" items={['boss', 'revolve', 'loft', 'rib', 'shell', 'sweep', 'revolve', 'sweep', 'hook', 'tent', 'fillet', 'v', 'tent', 'shell', 'letterBox', 'grid', 'arrowDown', 'arrowUp', 'boss', 'no', 'fan', 'globe', 'swap', 'frame']} />
        <span className="w-[9px]" />
      </div>
      <div className="flex h-[19px] shrink-0 border-b border-[#b5b8c8] bg-[#dcdeea]">
        <Strip className="flex-[98]" items={['cube', 'tag', 'lines', 'dashes', 'spacing', 'constraint']} />
        <FormatStrip />
        <Strip className="flex-[287]" items={['tag', 'v', 'tag', 'wave', 'sketch', 'text', 'balloon', 'balloon', 'check', 'wave', 'frame', 'letterBox', 'balloon', 'dashes', 'tri', 'shade', 'letterBox', 'v', 'target', '_']} />
        <button type="button" className="-ml-4 w-4 text-[10px] leading-none font-bold text-[#3f424f]">»</button>
      </div>
      <div className="flex min-h-0 flex-1">
        <div className="flex w-[26px] shrink-0 flex-col bg-[#c5c8dc]">
          <Column className="flex-[228]" items={['shell+', 'frame+', '|', 'fillet+', 'loft', 'shell', 'boss', 'fan', 'planes', 'sweep', 'tent', '|', 'pattern+', '|', 'axis+', 'spring+', 'link']} />
          <Column className="flex-[287]" items={['revolve', 'open+', 'clip', 'pattern+', 'frame', 'balloon+', 'tag', 'fillet', 'grid+', 'axis+', 'convert', 'swap', 'sketch', 'trim', 'grid', 'boss', 'revolve', 'frame', 'trim', 'link']} />
          <div className="flex-[36]" />
        </div>
        <PropertyPanel />
        <div className="flex min-w-0 flex-1 flex-col">
          <Viewport />
          <div className="flex h-[10px] shrink-0 bg-[#dccfca]">
            <ScrollButton label="Scorri a sinistra" d="M5 0v6L1 3z" />
            <div className="w-9 bg-[#efecea]" />
            <div className="flex-1" />
            <ScrollButton label="Scorri a destra" d="M1 0v6l4-3z" />
            <div className="w-[2px]" />
          </div>
        </div>
        <TaskRail />
        <div className="flex w-[27px] shrink-0 flex-col bg-[#c5c8dc]">
          <Column className="flex-[381]" items={['corner+', 'tag+', '|', 'line+', 'rect+', 'slot+', 'circle+', 'arc+', 'spline+', 'ellipse+', 'curve+', 'hex', 'star', 'frame', 'text', '|', 'trim+', 'cube+', 'offset', 'mirror', 'dots+', 'convert+', 'move', 'fan+', 'plusArc', '*relation+', '*repair']} />
          <div className="flex-[170]" />
        </div>
      </div>
      <StatusBar />
      <TaskBar />
    </div>
  );
}
